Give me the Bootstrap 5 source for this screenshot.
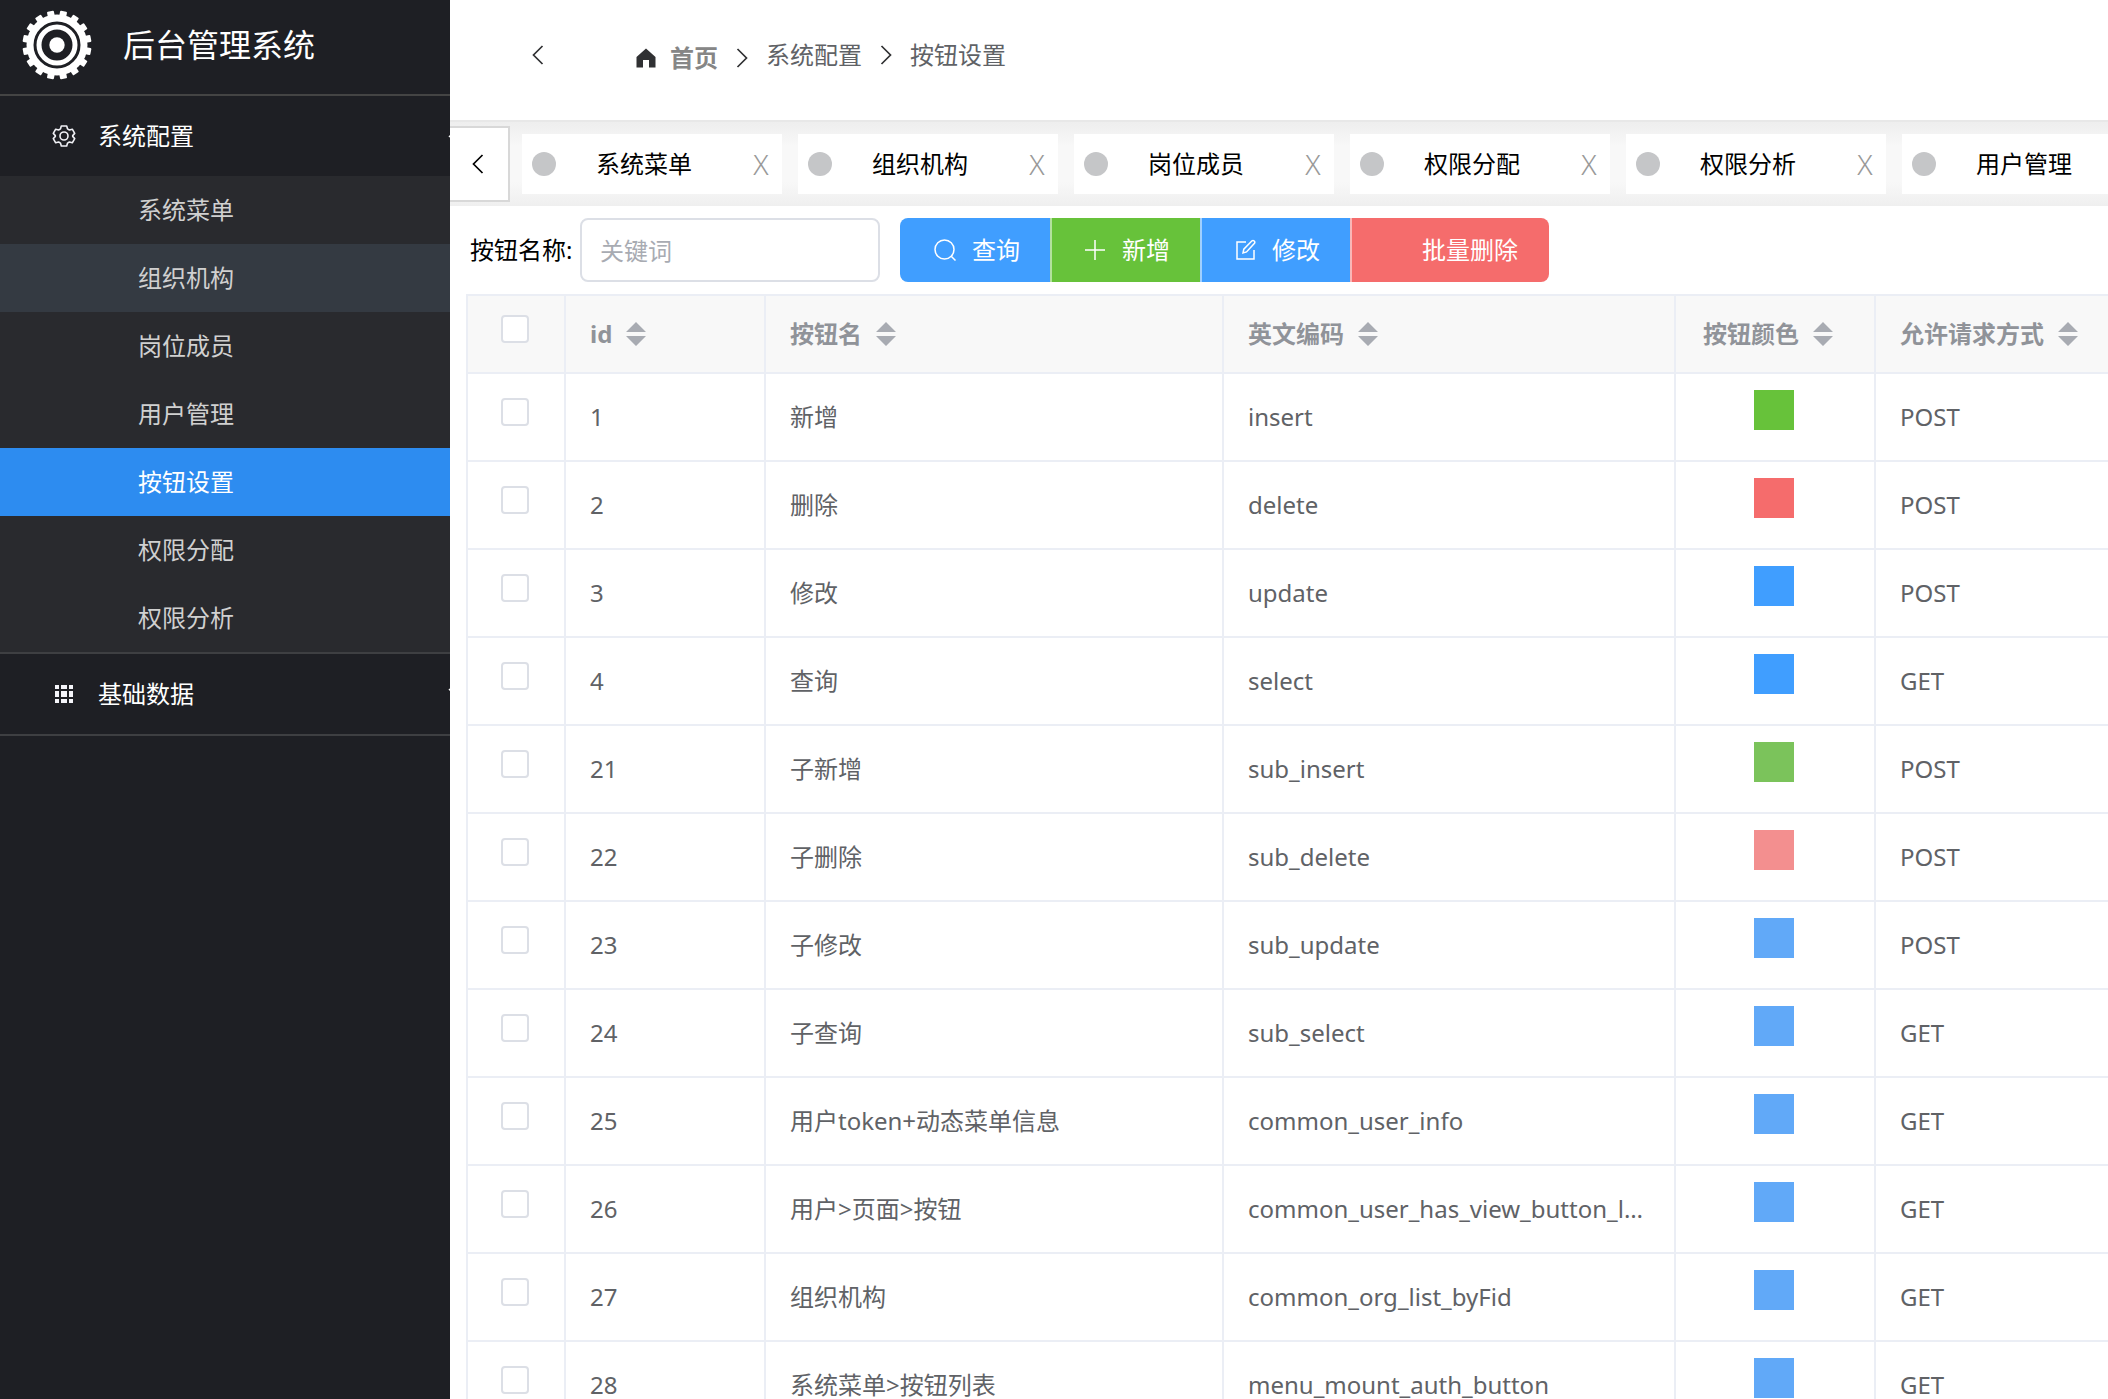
<!DOCTYPE html>
<html lang="zh-CN">
<head>
<meta charset="utf-8">
<meta name="viewport" content="width=device-width, initial-scale=1">
<title>后台管理系统</title>
<link href="https://cdn.jsdelivr.net/npm/bootstrap@5.3.0/dist/css/bootstrap.min.css" rel="stylesheet">
<style>
  body { font-family: "Noto Sans", "Noto Sans CJK SC", sans-serif; font-size: 24px; line-height: 36px; color: #000; }
  svg { display: block; flex: none; }
  .side-bar { width: 450px; background: #1e1f24; flex: none; }
  .brand-row { height: 96px; border-bottom: 2px solid #444; padding: 0 20px 4px; gap: 29px; color: #fff; font-size: 32px; }
  .menu-group { border-bottom: 2px solid #3e3f42; }
  .menu-head { height: 80px; padding-left: 52px; color: #fff; white-space: nowrap; }
  .menu-head .menu-name { width: 372px; padding-left: 22px; flex: none; }
  .menu-sub { background: #292a2e; }
  .menu-sub a { display: flex; align-items: center; height: 68px; padding-left: 138px; color: #d0d0d0; text-decoration: none; }
  .menu-sub a.is-hover { background: #343a42; }
  .menu-sub a.is-active { background: #2d8cf0; color: #fff; }
  .top-bar { height: 122px; border-bottom: 2px solid #e8e8e8; padding: 0 78px 10px; }
  .icon-btn { border: 0; background: none; padding: 0; color: #303133; }
  .crumb-list { margin-left: 90px; gap: 18px; color: #606266; }
  .crumb-home { gap: 18px; padding-top: 6px; }
  .crumb-list a { gap: 12px; font-weight: 700; color: #868686; text-decoration: none; }
  .tab-strip { height: 84px; gap: 12px; background: linear-gradient(#eee, #f8f8f8 24px, #f8f8f8 60px, #efefef); }
  .tab-strip .strip-prev { width: 60px; height: 76px; flex: none; background: #fff; border: 2px solid #d8d8d8; border-left: 0; color: #000; padding: 0 0 0 22px; }
  .tab-list { gap: 16px; }
  .tab-box { width: 260px; height: 60px; flex: none; background: #fff; padding: 0 12px 0 10px; gap: 40px; }
  .tab-dot { width: 24px; height: 24px; border-radius: 50%; background: #c5c6c8; }
  .tab-close { border: 0; background: none; padding: 0; color: #999; font-weight: 300; width: 18px; font-size: 28px; }
  .query-row { padding: 12px 20px; }
  .query-row label { width: 110px; white-space: nowrap; }
  .query-row .form-control { width: 300px; height: 64px; border: 2px solid #dcdfe6; border-radius: 8px; font-size: 24px; padding: 0 18px; margin-right: 20px; }
  .query-row .form-control::placeholder { color: #a8abb2; }
  .act-btn { height: 64px; padding: 0 31px 0 32px; border: 0; font-size: 24px; color: #fff; display: flex; align-items: center; gap: 16px; border-radius: 8px; flex: none; }
  .btn-group > .act-btn:not(:first-child) { border-left: 2px solid rgba(255,255,255,.5); padding-left: 30px; }
  .act-blue, .act-blue:hover { background: #409eff; color: #fff; }
  .act-green, .act-green:hover { background: #67c23a; color: #fff; }
  .act-red, .act-red:hover { background: #f56c6c; color: #fff; }
  .icon-slot { width: 24px; height: 24px; flex: none; }
  .data-wrap { padding-left: 16px; }
  .data-grid { table-layout: fixed; width: 1690px; border-collapse: separate; border-spacing: 0; border-top: 2px solid #ebeef5; border-left: 2px solid #ebeef5; color: #606266; margin: 0; }
  .data-grid th, .data-grid td { border-right: 2px solid #ebeef5; border-bottom: 2px solid #ebeef5; padding: 0 24px; vertical-align: middle; white-space: nowrap; overflow: hidden; text-overflow: ellipsis; }
  .data-grid th { height: 78px; background: #f8f8f8; color: #909399; }
  .data-grid td { height: 88px; padding-right: 30px; }
  .data-grid .cell-pick { padding: 0 2px 10px 0; }
  .data-grid .cell-pick input { display: block; width: 28px; height: 28px; border: 2px solid #dcdfe6; border-radius: 4px; margin: 0 auto; float: none; }
  .data-grid .cell-color { padding: 0 2px 14px 0; }
  .data-grid th.cell-mid { padding: 0; }
  .th-line { gap: 14px; }
  .th-line svg { margin-right: 14px; }
  .swatch { display: block; width: 40px; height: 40px; margin: 0 auto; }
</style>
<script src="https://cdn.jsdelivr.net/npm/bootstrap@5.3.0/dist/js/bootstrap.bundle.min.js"></script>
</head>
<body>
<svg width="0" height="0" class="position-absolute" aria-hidden="true">
  <symbol id="sort" viewBox="0 0 20 24"><path d="M10 0L20 10H0zM0 14H20L10 24z" fill="#a8abb2"/></symbol>
  <symbol id="left" viewBox="0 0 12 20"><path d="M10.500 1L1.500 10l9 9" fill="none" stroke="currentColor" stroke-width="1.700"/></symbol>
  <symbol id="right" viewBox="0 0 12 20"><path d="M1.500 1l9 9-9 9" fill="none" stroke="currentColor" stroke-width="1.700"/></symbol>
</svg>
<div class="d-flex vh-100 overflow-hidden">
  <aside class="side-bar overflow-hidden">
    <div class="brand-row d-flex align-items-center">
      <svg width="74" height="70" viewBox="-37 -35 74 70">
        <g id="gear" fill="#fff"></g>
        <circle r="27" fill="none" stroke="#fff" stroke-width="7"/>
        <circle r="18" fill="none" stroke="#fff" stroke-width="5"/>
        <circle r="7.700" fill="#fff"/>
      </svg>
      <span>后台管理系统</span>
    </div>
    <nav>
      <div class="menu-group">
        <div class="menu-head d-flex align-items-center">
          <svg width="24" height="24" viewBox="0 0 24 24" fill="none" stroke="#f0f0f5" stroke-width="1.600" stroke-linejoin="round"><path d="M9.300 2h5.400l.8 2.900 1.900 1.100 2.900-.8 2.400 4.200-2 2.200v.8l2 2.200-2.400 4.200-2.900-.8-1.900 1.100-.8 2.900H9.300l-.8-2.900L6.600 18l-2.900.8-2.400-4.200 2-2.200v-.8l-2-2.200 2.400-4.200 2.900.8 1.900-1.100z"/><circle cx="12" cy="12" r="4"/></svg>
          <span class="menu-name">系统配置</span>
          <svg width="16" height="16" viewBox="0 0 16 16" fill="none" stroke="#fff" stroke-width="1.500"><path d="M1 9l7-7 7 7"/></svg>
        </div>
        <div class="menu-sub">
          <a href="#">系统菜单</a>
          <a href="#" class="is-hover">组织机构</a>
          <a href="#">岗位成员</a>
          <a href="#">用户管理</a>
          <a href="#" class="is-active" aria-current="page">按钮设置</a>
          <a href="#">权限分配</a>
          <a href="#">权限分析</a>
        </div>
      </div>
      <div class="menu-group">
        <div class="menu-head d-flex align-items-center">
          <svg width="24" height="24" viewBox="0 0 24 24" fill="#f5f5fa"><path d="M3 3h4v4H3zM9 3h6v4H9zM17 3h4v4h-4zM3 9h4v6H3zM9 9h6v6H9zM17 9h4v6h-4zM3 17h4v4H3zM9 17h6v4H9zM17 17h4v4h-4z"/></svg>
          <span class="menu-name">基础数据</span>
          <svg width="16" height="16" viewBox="0 0 16 16" fill="none" stroke="#fff" stroke-width="1.500"><path d="M1 3l7 7 7-7"/></svg>
        </div>
      </div>
    </nav>
  </aside>

  <main class="flex-grow-1 overflow-hidden">
    <header class="top-bar d-flex align-items-center">
      <button type="button" class="icon-btn ps-1" aria-label="返回"><svg width="12" height="20"><use href="#left"/></svg></button>
      <nav class="crumb-list d-flex align-items-center" aria-label="导航">
        <div class="crumb-home d-flex align-items-center">
          <a href="#" class="d-flex align-items-center">
            <svg width="24" height="24" viewBox="0 0 24 24"><path d="M12 2.500L21.500 11v10.500H15V14H9v7.500H2.500V11z" fill="#303133"/></svg>
            首页
          </a>
          <svg width="12" height="20" color="#303133"><use href="#right"/></svg>
        </div>
        <span>系统配置</span>
        <svg width="12" height="20" color="#303133"><use href="#right"/></svg>
        <span>按钮设置</span>
      </nav>
    </header>

    <div class="tab-strip d-flex align-items-center overflow-hidden">
      <button type="button" class="strip-prev" aria-label="向左"><svg width="12" height="20"><use href="#left"/></svg></button>
      <div class="tab-list d-flex" id="tabs"></div>
    </div>

    <form class="query-row d-flex align-items-center" onsubmit="return false">
      <label for="kw">按钮名称:</label>
      <input id="kw" class="form-control" type="text" placeholder="关键词">
      <div class="btn-group">
        <button type="button" class="btn act-btn act-blue"><svg width="24" height="24" viewBox="0 0 24 24" fill="none" stroke="#fff" stroke-width="1.500"><circle cx="12.500" cy="11.500" r="9.500"/><path d="M19 18l4.500 4.500"/></svg>查询</button>
        <button type="button" class="btn act-btn act-green"><svg width="24" height="24" viewBox="0 0 24 24" stroke="#fff" stroke-width="1.500"><path d="M13 2v20M3 12h20"/></svg>新增</button>
        <button type="button" class="btn act-btn act-blue"><svg width="24" height="24" viewBox="0 0 24 24" fill="none" stroke="#fff" stroke-width="1.500"><path d="M14 4H5v17h17v-9"/><path d="M11 15l.8-3.800L20 2.800c1.500-1 3.500.8 2.500 2.500l-8 8.600z"/></svg>修改</button>
        <button type="button" class="btn act-btn act-red"><span class="icon-slot"></span>批量删除</button>
      </div>
    </form>

    <div class="data-wrap">
      <table class="data-grid">
        <colgroup><col style="width:98px"><col style="width:200px"><col style="width:458px"><col style="width:452px"><col style="width:200px"><col></colgroup>
        <thead>
          <tr>
            <th class="cell-pick"><input type="checkbox" class="form-check-input" aria-label="全选"></th>
            <th><div class="th-line d-flex align-items-center">id<svg width="20" height="24"><use href="#sort"/></svg></div></th>
            <th><div class="th-line d-flex align-items-center">按钮名<svg width="20" height="24"><use href="#sort"/></svg></div></th>
            <th><div class="th-line d-flex align-items-center">英文编码<svg width="20" height="24"><use href="#sort"/></svg></div></th>
            <th class="cell-mid"><div class="th-line d-flex align-items-center justify-content-center">按钮颜色<svg width="20" height="24"><use href="#sort"/></svg></div></th>
            <th><div class="th-line d-flex align-items-center">允许请求方式<svg width="20" height="24"><use href="#sort"/></svg></div></th>
          </tr>
        </thead>
        <tbody id="rows"></tbody>
      </table>
    </div>
  </main>
</div>
<script>
  const gear = [];
  for (let i = 0; i < 16; i++) gear.push(`<rect x="-3.500" y="-34.500" width="7" height="8" rx="1" transform="rotate(${i * 22.5 + 11.25})"/>`);
  document.getElementById('gear').innerHTML = gear.join('');

  document.getElementById('tabs').innerHTML = ['系统菜单', '组织机构', '岗位成员', '权限分配', '权限分析', '用户管理'].map(t =>
    `<div class="tab-box d-flex align-items-center"><span class="tab-dot"></span><span>${t}</span><button type="button" class="tab-close ms-auto" aria-label="关闭${t}">X</button></div>`).join('');

  const data = [
    [1, '新增', 'insert', '#67c23a', 'POST'],
    [2, '删除', 'delete', '#f56c6c', 'POST'],
    [3, '修改', 'update', '#409eff', 'POST'],
    [4, '查询', 'select', '#409eff', 'GET'],
    [21, '子新增', 'sub_insert', '#7bc35b', 'POST'],
    [22, '子删除', 'sub_delete', '#f38f8f', 'POST'],
    [23, '子修改', 'sub_update', '#61a9f8', 'POST'],
    [24, '子查询', 'sub_select', '#61a9f8', 'GET'],
    [25, '用户token+动态菜单信息', 'common_user_info', '#61a9f8', 'GET'],
    [26, '用户&gt;页面&gt;按钮', 'common_user_has_view_button_list', '#61a9f8', 'GET'],
    [27, '组织机构', 'common_org_list_byFid', '#61a9f8', 'GET'],
    [28, '系统菜单&gt;按钮列表', 'menu_mount_auth_button', '#61a9f8', 'GET']
  ];
  document.getElementById('rows').innerHTML = data.map(r =>
    `<tr><td class="cell-pick"><input type="checkbox" class="form-check-input" aria-label="选择 ${r[0]}"></td><td>${r[0]}</td><td>${r[1]}</td><td>${r[2]}</td><td class="cell-color"><span class="swatch" style="background:${r[3]}"></span></td><td>${r[4]}</td></tr>`).join('');
</script>
</body>
</html>
